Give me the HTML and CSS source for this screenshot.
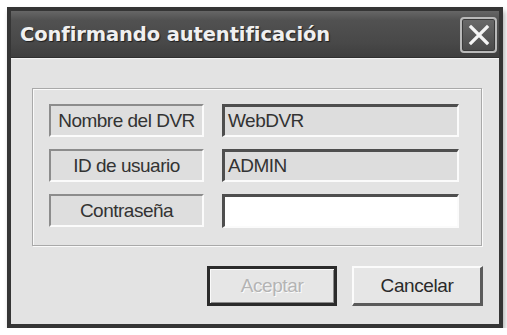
FILE: index.html
```html
<!DOCTYPE html>
<html lang="es">
<head>
    <meta charset="UTF-8">
    <title>Confirmando autentificación</title>
    <link rel="stylesheet" href="styles.css">
</head>
<body>
    <div class="window">
        <div class="titlebar">
            <span class="title">Confirmando autentificación</span>
            <button class="close" aria-label="Cerrar">
                <svg width="22" height="22" viewBox="0 0 22 22">
                    <path d="M3 3 L19 19 M19 3 L3 19" stroke="#f4f4f4" stroke-width="3.2" stroke-linecap="square" fill="none"/>
                </svg>
            </button>
        </div>
        <div class="content">
            <div class="group">
                <div class="row">
                    <div class="label">Nombre del DVR</div>
                    <div class="value">WebDVR</div>
                </div>
                <div class="row">
                    <div class="label">ID de usuario</div>
                    <div class="value">ADMIN</div>
                </div>
                <div class="row">
                    <div class="label">Contraseña</div>
                    <div class="value input"></div>
                </div>
            </div>
            <div class="actions">
                <button class="btn default" disabled>Aceptar</button>
                <button class="btn">Cancelar</button>
            </div>
        </div>
    </div>
</body>
</html>
```

FILE: styles.css
```css
:root {
    --face: #e3e3e3;
    --shadow: #8c8c8c;
    --dark: #4e4e4e;
    --light: #fbfbfb;
}

body {
    margin: 0;
    background: #ffffff;
    font-family: 'Liberation Sans', Arial, sans-serif;
}

.window {
    box-sizing: border-box;
    width: 496px;
    height: 321px;
    margin: 7px 0 0 7px;
    border: 4px solid #353535;
    background: var(--face);
    display: flex;
    flex-direction: column;
    box-shadow: 2px 4px 5px rgba(0, 0, 0, 0.3);
}

.titlebar {
    height: 46px;
    flex-shrink: 0;
    display: flex;
    align-items: center;
    justify-content: space-between;
    padding: 0 2px 0 9px;
    background: linear-gradient(#666666, #515151 20%, #484848 70%, #3e3e3e);
    border-bottom: 1px solid #2f2f2f;
}

.title {
    font-family: 'DejaVu Sans', Verdana, sans-serif;
    font-weight: bold;
    font-size: 19.5px;
    color: #f0f0f0;
    letter-spacing: -0.1px;
    text-shadow: 1px 1px 1px rgba(0, 0, 0, 0.6);
    margin-top: 1px;
}

.close {
    box-sizing: border-box;
    width: 37px;
    height: 36px;
    padding: 0;
    margin-top: 2px;
    border: 2px solid #b9b9b9;
    border-radius: 4px;
    background: linear-gradient(#6a6a6a, #4a4a4a);
    display: flex;
    align-items: center;
    justify-content: center;
    box-shadow: inset 0 0 0 1px #3a3a3a;
}

.content {
    flex: 1;
    display: flex;
    flex-direction: column;
    padding: 29px 17px 0 21px;
    border-top: 1px solid #f2f2f2;
}

.group {
    box-sizing: border-box;
    height: 158px;
    border: 1px solid #a9a9a9;
    box-shadow: inset 1px 1px 0 #fafafa, 1px 1px 0 #fafafa;
    padding: 15px 22px 0 16px;
    display: flex;
    flex-direction: column;
    gap: 12px;
}

.row {
    display: flex;
    gap: 18px;
    height: 33px;
}

.label,
.value {
    box-sizing: border-box;
    height: 33px;
    display: flex;
    align-items: center;
    font-size: 19px;
    letter-spacing: -0.5px;
    color: #333333;
}

.label {
    width: 155px;
    justify-content: center;
    background: #dedede;
    border-top: 2px solid var(--shadow);
    border-left: 2px solid var(--shadow);
    border-bottom: 2px solid var(--light);
    border-right: 2px solid var(--light);
}

.value {
    width: 237px;
    padding-left: 3px;
    background: #dddddd;
    border-top: 3px solid var(--dark);
    border-left: 3px solid var(--dark);
    border-bottom: 2px solid var(--light);
    border-right: 2px solid var(--light);
}

.value.input {
    background: #ffffff;
    height: 34px;
}

.actions {
    display: flex;
    justify-content: flex-end;
    gap: 15px;
    margin-top: 20px;
    margin-right: -1px;
}

.btn {
    box-sizing: border-box;
    width: 131px;
    height: 40px;
    font-family: 'Liberation Sans', Arial, sans-serif;
    font-size: 19px;
    letter-spacing: -0.4px;
    color: #2a2a2a;
    background: #e6e6e6;
    border-top: 2px solid var(--light);
    border-left: 2px solid var(--light);
    border-bottom: 3px solid #5a5a5a;
    border-right: 3px solid #5a5a5a;
    padding: 0;
}

.btn.default {
    width: 130px;
    border: 3px solid #2b2b2b;
    box-shadow: inset 1px 1px 0 #fafafa, inset -1px -1px 0 #8a8a8a;
    color: #b4b4b4;
    text-shadow: 1px 1px 0 #fbfbfb;
}
```
